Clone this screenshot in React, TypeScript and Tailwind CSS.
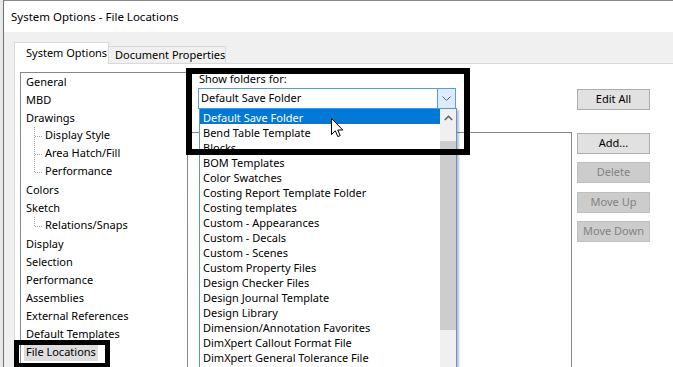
import React from "react";

const font = { fontFamily: '"Noto Sans", "Open Sans", sans-serif' };

type TreeItem = { t: string; child?: boolean; last?: boolean; sel?: boolean };

const tree: TreeItem[] = [
  { t: "General" },
  { t: "MBD" },
  { t: "Drawings" },
  { t: "Display Style", child: true },
  { t: "Area Hatch/Fill", child: true },
  { t: "Performance", child: true, last: true },
  { t: "Colors" },
  { t: "Sketch" },
  { t: "Relations/Snaps", child: true, last: true },
  { t: "Display" },
  { t: "Selection" },
  { t: "Performance" },
  { t: "Assemblies" },
  { t: "External References" },
  { t: "Default Templates" },
  { t: "File Locations", sel: true },
  { t: "FeatureManager" },
];

const folders = [
  "Default Save Folder",
  "Bend Table Template",
  "Blocks",
  "BOM Templates",
  "Color Swatches",
  "Costing Report Template Folder",
  "Costing templates",
  "Custom - Appearances",
  "Custom - Decals",
  "Custom - Scenes",
  "Custom Property Files",
  "Design Checker Files",
  "Design Journal Template",
  "Design Library",
  "Dimension/Annotation Favorites",
  "DimXpert Callout Format File",
  "DimXpert General Tolerance File",
];

function Connector({ last }: { last?: boolean }) {
  return (
    <svg width="11" height="18" className="shrink-0">
      <line x1="0.5" y1="0" x2="0.5" y2={last ? 9.5 : 18} stroke="#a0a0a0" strokeDasharray="1 1" />
      <line x1="1" y1="9.5" x2="9" y2="9.5" stroke="#a0a0a0" strokeDasharray="1 1" />
    </svg>
  );
}

function Btn({ label, disabled }: { label: string; disabled?: boolean }) {
  return (
    <div
      className={
        "w-[73px] h-[21px] flex items-center justify-center border text-[11px] whitespace-nowrap " +
        (disabled
          ? "bg-[#cccccc] border-[#bfbfbf] text-[#838383]"
          : "bg-[#e1e1e1] border-[#adadad] text-black")
      }
    >
      {label}
    </div>
  );
}

export default function App() {
  return (
    <div
      className="relative w-[673px] h-[367px] overflow-hidden flex bg-white text-black"
      style={font}
    >
      {/* background window sliver */}
      <div className="w-[4px] h-full bg-[#e9e9e9] border-r border-[#6e6e6e] shrink-0" />
      {/* dialog */}
      <div className="flex-1 flex flex-col border-t border-[#8a8a8a] min-w-0">
        <div className="h-[31px] bg-white flex items-center pl-[7px] text-[11.5px] shrink-0 whitespace-nowrap">
          System Options - File Locations
        </div>
        <div className="flex-1 bg-[#f0f0f0] flex flex-col pl-[10px] pt-[10px]">
          {/* tabs */}
          <div className="flex items-end h-[22px] shrink-0">
            <div className="h-[22px] w-[95px] bg-white border border-b-0 border-[#d9d9d9] flex items-center pl-[11px] text-[11px] whitespace-nowrap relative z-10">
              System Options
            </div>
            <div className="h-[18px] w-[117px] bg-[#f0f0f0] border border-l-0 border-b-0 border-[#d9d9d9] flex items-center pl-[6px] text-[11px] whitespace-nowrap">
              Document Properties
            </div>
          </div>
          {/* panel */}
          <div className="flex-1 bg-white border-l border-t border-[#d9d9d9] -mt-px flex pl-[5px] pt-[8px]">
            {/* tree */}
            <div className="w-[168px] h-[310px] border border-[#828790] bg-white shrink-0 text-[11px]">
              {tree.map((it, i) => (
                <div key={i} className="h-[18px] leading-[18px] flex items-center whitespace-nowrap">
                  {it.child ? (
                    <div className="flex items-center pl-[13px]">
                      <Connector last={it.last} />
                      <span className="pb-[2px]">{it.t}</span>
                    </div>
                  ) : (
                    <div className="pl-[3px] flex items-center">
                      <span
                        className={
                          "px-[2px] h-[17px] leading-[15px] inline-block " +
                          (it.sel ? "bg-[#dedede]" : "")
                        }
                      >
                        {it.t}
                      </span>
                    </div>
                  )}
                </div>
              ))}
            </div>
            {/* middle */}
            <div className="w-[382px] ml-[2px] flex flex-col shrink-0">
              <div className="pl-[9px] text-[11px] leading-[16px] -mt-[1px]">Show folders for:</div>
              <div className="ml-[8px] mt-[1px] w-[258px] h-[21px] border border-[#569de5] bg-white flex text-[11px]">
                <div className="flex-1 flex items-center pl-[2px]">Default Save Folder</div>
                <div className="w-[18px] h-full bg-[#dcecfc] border-l border-[#569de5] flex items-center justify-center">
                  <svg width="9" height="5" viewBox="0 0 9 5">
                    <path d="M0.5 0.5 L4.5 4.5 L8.5 0.5" fill="none" stroke="#5a6a7a" strokeWidth="1" />
                  </svg>
                </div>
              </div>
              <div className="mt-[23px] flex-1 border-t border-r border-[#828790] bg-white" />
            </div>
            {/* buttons */}
            <div className="ml-[5px] pt-[17px] flex flex-col shrink-0">
              <Btn label="Edit All" />
              <div className="h-[23px]" />
              <Btn label="Add..." />
              <div className="h-[8px]" />
              <Btn label="Delete" disabled />
              <div className="h-[9px]" />
              <Btn label="Move Up" disabled />
              <div className="h-[8px]" />
              <Btn label="Move Down" disabled />
            </div>
          </div>
        </div>
      </div>

      {/* dropdown popup (overlay) */}
      <div className="absolute left-[199px] top-[108px] w-[258px] h-[270px] border border-[#5b95d6] bg-white flex text-[11px] shadow-[2px_2px_2px_rgba(0,0,0,0.25)]">
        <div className="flex-1 flex flex-col">
          {folders.map((f, i) => (
            <div
              key={i}
              className={
                "h-[15px] leading-[17px] pl-[3px] whitespace-nowrap " +
                (i === 0 ? "bg-[#0078d7] text-white" : "")
              }
            >
              {f}
            </div>
          ))}
        </div>
        <div className="w-[16px] bg-[#f0f0f0] flex flex-col">
          <div className="h-[17px] flex items-center justify-center">
            <svg width="9" height="6" viewBox="0 0 9 6">
              <path d="M0.8 5 L4.5 1.3 L8.2 5" fill="none" stroke="#606060" strokeWidth="1.6" />
            </svg>
          </div>
          <div className="h-[15px]" />
          <div className="h-[189px] bg-[#cdcdcd]" />
        </div>
      </div>

      {/* mouse cursor */}
      <svg className="absolute left-[331px] top-[118px]" width="13" height="20" viewBox="0 0 13 20">
        <path
          d="M0.5 0.5 L0.5 16.5 L4.3 12.8 L6.8 18.6 L9.2 17.6 L6.8 12 L11.8 12 Z"
          fill="white"
          stroke="black"
          strokeWidth="1"
        />
      </svg>

      {/* annotation boxes */}
      <div className="absolute left-[186px] top-[68px] w-[284px] h-[87px] border-[6px] border-black" />
      <div className="absolute left-[14px] top-[340px] w-[96px] h-[28px] border-[5px] border-black" />
    </div>
  );
}
